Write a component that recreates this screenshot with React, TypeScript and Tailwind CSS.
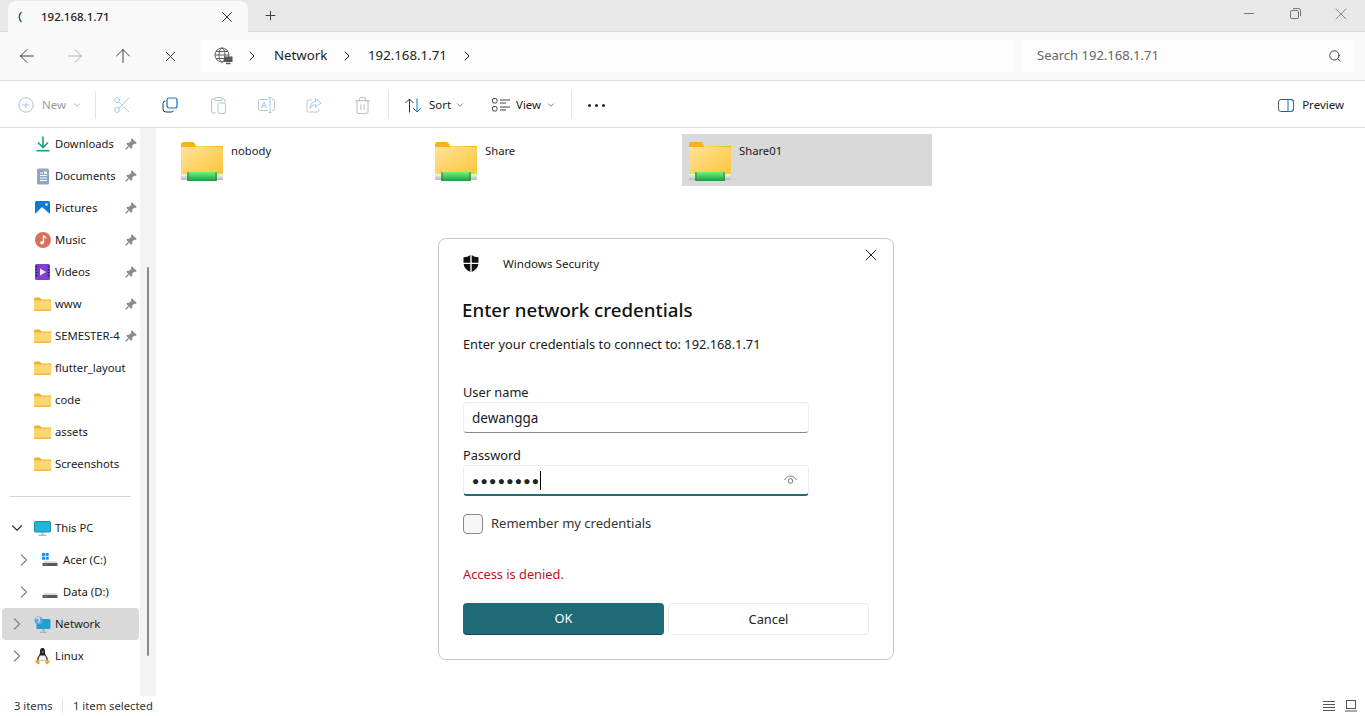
import { ArrowLeft, ArrowRight, ArrowUp, ChevronDown, ChevronRight, Plus, Scissors, Search, Trash2, X } from "lucide-react";

const FolderSmall = () => (
  <svg width="17" height="14" viewBox="0 0 17 14" className="shrink-0">
    <path d="M0 2a1.500 1.500 0 0 1 1.500-1.500h4L7.500 2.500H17V5H0z" fill="#f2b01e" />
    <path d="M0 3.500h15.500A1.500 1.500 0 0 1 17 5v7.500a1.200 1.200 0 0 1-1.200 1.200H1.200A1.200 1.200 0 0 1 0 12.500z" fill="#fbd774" />
    <path d="M0 12.600h17v.2a1 1 0 0 1-1 1H1a1 1 0 0 1-1-1z" fill="#eeb32e" />
  </svg>
);

const NetFolder = ({ id }: { id: string }) => (
  <svg width="42" height="40" viewBox="0 0 42 40" className="shrink-0">
    <defs>
      <linearGradient id={`f${id}`} x1="0" y1="0" x2="1" y2="1">
        <stop offset="0" stopColor="#fee29a" />
        <stop offset="1" stopColor="#fdc638" />
      </linearGradient>
      <linearGradient id={`g${id}`} x1="0" y1="0" x2="0" y2="1">
        <stop offset="0" stopColor="#72f07a" />
        <stop offset="1" stopColor="#1f9a45" />
      </linearGradient>
      <linearGradient id={`b${id}`} x1="0" y1="0" x2="0" y2="1">
        <stop offset="0" stopColor="#f6f6f6" />
        <stop offset="1" stopColor="#b8b8b8" />
      </linearGradient>
    </defs>
    <path d="M0 2.500A2.500 2.500 0 0 1 2.500 0h8.500a3 3 0 0 1 3 2l1 2h26a1 1 0 0 1 1 1v3H0z" fill="#f6b417" />
    <path d="M0 5h14.500l1.500-1 24 1a2 2 0 0 1 2 2v26H0z" fill={`url(#f${id})`} />
    <rect x="0" y="32" width="42" height="6" fill={`url(#b${id})`} />
    <rect x="6" y="30" width="30" height="9" rx="1" fill={`url(#g${id})`} />
    <path d="M7 30v9M35 30v9" stroke="#1c8f3f" strokeWidth="1" />
  </svg>
);

const Pin = () => (
  <svg width="12" height="12" viewBox="0 0 12 12" className="shrink-0">
    <path d="M7 .3 11.700 5 10.700 6 9.200 5.700 7.300 7.600 7.200 9.800 6 10.700 1.300 6 2.200 4.800 4.400 4.700 6.300 2.800 6 1.300z" fill="#878d94" />
    <path d="M3.500 8.500 .8 11.200" stroke="#878d94" strokeWidth="1.400" />
  </svg>
);

const DownloadIcon = () => (
  <svg width="16" height="16" viewBox="0 0 16 16">
    <path d="M8 .5v10M3 6.500l5 5 5-5" stroke="#12a57d" strokeWidth="1.600" fill="none" />
    <path d="M1.500 14.700h13" stroke="#12a57d" strokeWidth="1.600" />
  </svg>
);

const DocumentIcon = () => (
  <svg width="16" height="17" viewBox="0 0 16 17">
    <rect x="2" y="0.500" width="12" height="16" rx="1.500" fill="#8fa4c0" />
    <path d="M5 5h3M5 7.500h7M5 10h7M5 12.500h7" stroke="#fff" strokeWidth="1" />
    <rect x="9" y="3.500" width="3" height="2.500" fill="#fff" />
  </svg>
);

const PictureIcon = () => (
  <svg width="15" height="15" viewBox="0 0 15 15">
    <rect width="15" height="15" rx="1.500" fill="#0f79d4" />
    <path d="M0 13 7 6l8 7v2H0z" fill="#fff" />
    <circle cx="11.500" cy="3.500" r="1.200" fill="#fff" />
  </svg>
);

const MusicIcon = () => (
  <svg width="16" height="16" viewBox="0 0 16 16">
    <circle cx="8" cy="8" r="8" fill="#d9705e" />
    <path d="M8.500 3.500v7" stroke="#fff" strokeWidth="1.400" />
    <path d="M8.500 3.500c1 1.500 2.500 1.500 2.500 3" stroke="#fff" strokeWidth="1.200" fill="none" />
    <circle cx="7" cy="10.800" r="1.800" fill="#fff" />
  </svg>
);

const VideoIcon = () => (
  <svg width="15" height="16" viewBox="0 0 15 16">
    <rect width="15" height="16" rx="1.500" fill="#7e3fd1" />
    <path d="M5 4.500v7L11 8z" fill="#f1e6ff" />
    <path d="M1.500 2v12M13.500 2v12" stroke="#2e1266" strokeWidth="1.500" strokeDasharray="1.500 1.500" />
  </svg>
);

const MonitorIcon = () => (
  <svg width="17" height="15" viewBox="0 0 17 15">
    <rect x="0.500" y="0.500" width="16" height="10.500" rx="1" fill="#23b4d8" stroke="#1a8eb2" />
    <path d="M8.500 11v2.500" stroke="#9bb0bb" strokeWidth="2" />
    <path d="M4.500 14.300h8" stroke="#9bb0bb" strokeWidth="1.200" />
  </svg>
);

const DriveIcon = ({ win }: { win?: boolean }) => (
  <svg width="16" height="14" viewBox="0 0 16 14">
    {win && (
      <g fill="#1495e8">
        <rect x="0" y="0" width="3" height="3" />
        <rect x="3.700" y="0" width="3" height="3" />
        <rect x="0" y="3.700" width="3" height="3" />
        <rect x="3.700" y="3.700" width="3" height="3" />
      </g>
    )}
    <path d="M2 8h12l1.500 2H.5z" fill="#dcdcdc" />
    <rect x="0.500" y="10" width="15" height="3" rx="0.500" fill="#55585c" />
    <rect x="3" y="11" width="1.500" height="1" fill="#5dd35d" />
  </svg>
);

const NetworkIcon = () => (
  <svg width="17" height="17" viewBox="0 0 17 17">
    <rect x="2.500" y="3" width="14" height="10" rx="1" fill="#1e9fcf" />
    <path d="M9.500 13v2.500" stroke="#9bb0bb" strokeWidth="2" />
    <path d="M6 16.300h7" stroke="#9bb0bb" strokeWidth="1.200" />
    <circle cx="4.500" cy="4.500" r="4" fill="#6aa6dc" />
    <path d="M2 3c1-2 3-1.500 3.500-.5S4 5 5 6.500" stroke="#d9ebf7" strokeWidth="1.200" fill="none" />
  </svg>
);

const LinuxIcon = () => (
  <svg width="15" height="17" viewBox="0 0 15 17">
    <path d="M7.500 0C5 0 5 2.500 5 4.500 5 7 2 9 2 12.500h11C13 9 10 7 10 4.500 10 2.500 10 0 7.500 0z" fill="#222" />
    <path d="M5 7.500c-1 1.500-1.500 3-1.500 5h8c0-2-.5-3.500-1.500-5z" fill="#f4f4f4" />
    <path d="M6 3.500h3l-1.500 1.500z" fill="#eca81c" />
    <path d="M0 13.500 3 11l2 4-2 1.500zM15 13.500 12 11l-2 4 2 1.500z" fill="#eca81c" />
  </svg>
);

const GlobeIcon = () => (
  <svg width="19" height="18" viewBox="0 0 19 18" fill="none">
    <circle cx="8" cy="8" r="7" stroke="#5f5f5f" strokeWidth="1" />
    <ellipse cx="8" cy="8" rx="3" ry="7" stroke="#5f5f5f" />
    <path d="M1 8h14M2 4.500h12M2 11.500h12" stroke="#5f5f5f" />
    <rect x="10" y="9.500" width="8.500" height="5.500" fill="#555" />
    <path d="M12 16.500h4.500" stroke="#555" strokeWidth="1.500" />
  </svg>
);

const CopyIcon = () => (
  <svg width="16" height="16" viewBox="0 0 16 16" fill="none">
    <path d="M3.500 4A2.500 2.500 0 0 0 1 6.500V12a3 3 0 0 0 3 3h5.500a2.500 2.500 0 0 0 2.200-1.500" stroke="#333" strokeWidth="1" />
    <rect x="5" y="1" width="10" height="10" rx="2" stroke="#0a74d0" strokeWidth="1.200" />
  </svg>
);

const PasteIcon = () => (
  <svg width="15" height="17" viewBox="0 0 15 17" fill="none">
    <path d="M4 2H2a1.500 1.500 0 0 0-1.500 1.500v11A1.500 1.500 0 0 0 2 16h3M11 2h1.500A1.500 1.500 0 0 1 14 3.500V5" stroke="#bdbdbd" />
    <rect x="4" y="0.500" width="7" height="3" rx="1" stroke="#bdbdbd" />
    <rect x="7" y="6" width="7.500" height="10.500" rx="1.500" stroke="#9cc8ee" />
  </svg>
);

const RenameIcon = () => (
  <svg width="17" height="16" viewBox="0 0 17 16" fill="none">
    <path d="M10 2.500H2a1.500 1.500 0 0 0-1.500 1.500v8A1.500 1.500 0 0 0 2 13.500h8M14 2.500h1a1.500 1.500 0 0 1 1.500 1.500v8a1.500 1.500 0 0 1-1.500 1.500h-1" stroke="#c4c4c4" />
    <path d="M3.500 11 6 5l2.500 6M4.500 9h3" stroke="#9cc8ee" />
    <path d="M12 .5v15M10.500.5h3M10.500 15.500h3" stroke="#9cc8ee" />
  </svg>
);

const ShareIcon = () => (
  <svg width="16" height="15" viewBox="0 0 16 15" fill="none">
    <path d="M6 2H2.500A1.500 1.500 0 0 0 1 3.500v9A1.500 1.500 0 0 0 2.500 14h9a1.500 1.500 0 0 0 1.500-1.500V11" stroke="#c4c4c4" />
    <path d="M9.500.8 15 5l-5.500 4.200V6.800C7 6.800 5 8 4 10.500c0-4 2-6.500 5.500-7z" stroke="#9cc8ee" />
  </svg>
);

const SortIcon = () => (
  <svg width="17" height="15" viewBox="0 0 17 15" fill="none" className="shrink-0">
    <path d="M4.500 14.500V1M.5 5l4-4 4 4" stroke="#333" />
    <path d="M12 .5V14M8 10l4 4 4-4" stroke="#0a74d0" />
  </svg>
);

const ViewIcon = () => (
  <svg width="18" height="14" viewBox="0 0 18 14" fill="none" className="shrink-0">
    <rect x="0.500" y="0.500" width="4.500" height="4.500" rx="1.500" stroke="#444" />
    <rect x="0.500" y="8.500" width="4.500" height="4.500" rx="1.500" stroke="#444" />
    <path d="M8 2h10M8 5h6M8 9h10M8 12h6" stroke="#444" />
  </svg>
);

const PreviewIcon = () => (
  <svg width="16" height="13" viewBox="0 0 16 13" fill="none">
    <rect x="0.500" y="0.500" width="15" height="12" rx="2.500" stroke="#555" />
    <path d="M10 .5h3A2.500 2.500 0 0 1 15.500 3v7a2.500 2.500 0 0 1-2.500 2.500h-3z" stroke="#0a74d0" />
  </svg>
);

const ShieldIcon = () => (
  <svg width="16" height="17" viewBox="0 0 16 17" className="shrink-0">
    <path d="M7.300 0C5.500 1.500 3 2.200.5 2.300v5.400h6.800zM8.700 0c1.800 1.500 4.300 2.200 6.800 2.300v5.400H8.700zM.6 9.100h6.700V17C3.500 15.500 1.100 13 .6 9.100zM8.700 9.100h6.700c-.5 3.900-2.900 6.400-6.700 7.900z" fill="#111" />
  </svg>
);

const RestoreIcon = () => (
  <svg width="11" height="11" viewBox="0 0 11 11" fill="none">
    <rect x="0.500" y="2.500" width="8" height="8" rx="1.500" stroke="#777" />
    <path d="M3 .5h5.500a2 2 0 0 1 2 2V8" stroke="#777" />
  </svg>
);

const EyeIcon = () => (
  <svg width="13" height="10" viewBox="0 0 13 10" fill="none" className="ml-auto">
    <path d="M.5 5C2 2.500 4 1 6.500 1s4.500 1.500 6 4" stroke="#777" />
    <circle cx="6.500" cy="6" r="2.300" stroke="#777" />
  </svg>
);

const navItems = [
  { label: "Downloads", icon: <DownloadIcon />, pin: true },
  { label: "Documents", icon: <DocumentIcon />, pin: true },
  { label: "Pictures", icon: <PictureIcon />, pin: true },
  { label: "Music", icon: <MusicIcon />, pin: true },
  { label: "Videos", icon: <VideoIcon />, pin: true },
  { label: "www", icon: <FolderSmall />, pin: true },
  { label: "SEMESTER-4", icon: <FolderSmall />, pin: true },
  { label: "flutter_layout", icon: <FolderSmall /> },
  { label: "code", icon: <FolderSmall /> },
  { label: "assets", icon: <FolderSmall /> },
  { label: "Screenshots", icon: <FolderSmall /> },
];

const Sidebar = () => (
  <aside className="w-[140px] shrink-0 overflow-hidden text-[11.250px] text-[#1a1a1a]">
    {navItems.map((item) => (
      <div className="flex h-8 items-center pr-[3px]" key={item.label}>
        <div className="w-[34px] shrink-0" />
        <div className="flex w-[17px] shrink-0 justify-center">{item.icon}</div>
        <span className="ml-1 flex-1 whitespace-nowrap">{item.label}</span>
        {item.pin && <Pin />}
      </div>
    ))}
    <div className="mx-[10px] mt-4 mb-[15px] h-px w-[121px] bg-[#d5d5d5]" />
    <div className="flex h-8 items-center">
      <ChevronDown size={18} className="ml-[8px] text-[#333]" strokeWidth={1.500} />
      <div className="ml-[8px] flex w-[17px] justify-center"><MonitorIcon /></div>
      <span className="ml-1">This PC</span>
    </div>
    <div className="flex h-8 items-center">
      <ChevronRight size={20} className="ml-[14px] text-[#888]" strokeWidth={1.500} />
      <div className="ml-[8px] w-[16px]"><DriveIcon win /></div>
      <span className="ml-[5px]">Acer (C:)</span>
    </div>
    <div className="flex h-8 items-center">
      <ChevronRight size={20} className="ml-[14px] text-[#888]" strokeWidth={1.500} />
      <div className="ml-[8px] w-[16px]"><DriveIcon /></div>
      <span className="ml-[5px]">Data (D:)</span>
    </div>
    <div className="ml-[2px] flex h-8 w-[137px] items-center rounded-[4px] bg-[#d9d9d9]">
      <ChevronRight size={20} className="ml-[5px] text-[#888]" strokeWidth={1.500} />
      <div className="ml-[7px] flex w-[17px] justify-center"><NetworkIcon /></div>
      <span className="ml-1">Network</span>
    </div>
    <div className="flex h-8 items-center">
      <ChevronRight size={20} className="ml-[7px] text-[#888]" strokeWidth={1.500} />
      <div className="ml-[7px] flex w-[17px] justify-center"><LinuxIcon /></div>
      <span className="ml-1">Linux</span>
    </div>
  </aside>
);

const ToolIcon = ({ children }: { children: React.ReactNode }) => (
  <div className="flex w-12 shrink-0 items-center justify-center">{children}</div>
);

const Toolbar = () => (
  <div className="flex h-[47px] shrink-0 items-center border-b border-[#e0e0e0] bg-white pt-[2px] text-[11.500px] text-[#1a1a1a]">
    <div className="flex w-[95px] shrink-0 items-center pl-[18px] text-[#9a9a9a]">
      <svg width="16" height="16" viewBox="0 0 16 16" fill="none">
        <circle cx="8" cy="8" r="7.200" stroke="#bdbdbd" />
        <path d="M8 4.500v7M4.500 8h7" stroke="#9cc8ee" />
      </svg>
      <span className="ml-[8px]">New</span>
      <ChevronDown size={10} className="ml-[6px]" />
    </div>
    <div className="h-7 w-px bg-[#e5e5e5]" />
    <div className="ml-[2px] flex shrink-0">
      <ToolIcon><Scissors size={20} strokeWidth={1.100} className="text-[#9cc8ee]" /></ToolIcon>
      <ToolIcon><CopyIcon /></ToolIcon>
      <ToolIcon><PasteIcon /></ToolIcon>
      <ToolIcon><RenameIcon /></ToolIcon>
      <ToolIcon><ShareIcon /></ToolIcon>
      <ToolIcon><Trash2 size={19} strokeWidth={1.100} className="text-[#b0b0b0]" /></ToolIcon>
    </div>
    <div className="ml-[2px] h-7 w-px bg-[#e5e5e5]" />
    <div className="ml-[16px] flex items-center">
      <SortIcon />
      <span className="ml-[7px] w-[22px] whitespace-nowrap">Sort</span>
      <ChevronDown size={10} className="ml-[4px] text-[#666]" />
    </div>
    <div className="ml-[27px] flex items-center">
      <ViewIcon />
      <span className="ml-[6px] w-[25px] whitespace-nowrap">View</span>
      <ChevronDown size={10} className="ml-[5px] text-[#666]" />
    </div>
    <div className="ml-[15px] h-7 w-px bg-[#e5e5e5]" />
    <div className="ml-[16px] flex gap-[4px]">
      <span className="size-[3px] rounded-full bg-[#222]" />
      <span className="size-[3px] rounded-full bg-[#222]" />
      <span className="size-[3px] rounded-full bg-[#222]" />
    </div>
    <div className="mr-[21px] ml-auto flex items-center">
      <PreviewIcon />
      <span className="ml-2">Preview</span>
    </div>
  </div>
);

const files = [
  { name: "nobody", selected: false },
  { name: "Share", selected: false },
  { name: "Share01", selected: true },
];

const Dialog = () => (
  <div className="absolute top-[238px] left-[438px] h-[422px] w-[456px] rounded-[8px] border border-[#c8c8c8] bg-white pl-[24px] text-[#1a1a1a]">
    <button className="absolute top-[6px] right-[12px] text-[#222]"><X size={20} strokeWidth={1.200} /></button>
    <div className="flex h-[34px] items-center pt-[14px]">
      <ShieldIcon />
      <span className="mt-[1px] ml-[24px] text-[11.600px]">Windows Security</span>
    </div>
    <h1 className="mt-[23px] -ml-px h-[28px] text-[18.700px] leading-[28px] font-medium text-[#111]">Enter network credentials</h1>
    <p className="mt-[10px] text-[12.800px] leading-5">Enter your credentials to connect to: 192.168.1.71</p>
    <label className="mt-[28px] block text-[12.800px] leading-5">User name</label>
    <div className="flex h-[31px] w-[346px] items-center rounded-[4px] border border-[#ececec] border-b-[#8a8a8a] px-2 pt-px text-[13.500px]">dewangga</div>
    <label className="mt-[12px] block text-[12.800px] leading-5">Password</label>
    <div className="flex h-[31px] w-[346px] items-center rounded-[4px] border border-[#ececec] border-b-2 border-b-[#1f6a77] pr-[11px] pl-2">
      <span className="mt-[2px] text-[12px] tracking-[1.300px] text-[#222]">●●●●●●●●</span>
      <span className="h-[19px] w-px bg-black" />
      <EyeIcon />
    </div>
    <div className="mt-[18px] flex h-5 items-center">
      <span className="size-5 rounded-[4px] border border-[#8a8a8a] bg-[#f7f7f7]" />
      <span className="mb-px ml-2 text-[13px] text-[#333]">Remember my credentials</span>
    </div>
    <p className="mt-[30px] text-[12.800px] leading-5 text-[#c50f1f]">Access is denied.</p>
    <div className="mt-[19px] flex gap-[4px]">
      <button className="h-8 w-[201px] rounded-[4px] border-b border-b-[#104a55] bg-[#1f6a77] pt-px text-[12.800px] text-white">OK</button>
      <button className="h-8 w-[201px] rounded-[4px] border border-[#ececec] bg-white pt-px text-[12.800px] text-[#222]">Cancel</button>
    </div>
  </div>
);

export default function App() {
  return (
    <div className="relative flex h-[716px] w-[1365px] flex-col overflow-hidden bg-white font-['Noto_Sans','Open_Sans',sans-serif]">
      {/* tab strip */}
      <div className="flex h-8 shrink-0 items-end border-b border-[#d9d9d9] bg-[#e8e8e8] pl-2">
        <div className="-mb-px flex h-[31px] w-[240px] items-center rounded-t-[8px] bg-[#f9f9f9] pr-[12px] pl-[8px] text-[11.500px] text-[#222]">
          <svg width="6" height="12" viewBox="0 0 6 12" fill="none" className="ml-[1px]">
            <path d="M4.500 1C1.500 3.500 1.500 8.500 4.500 11" stroke="#1f6a77" strokeWidth="1.500" />
          </svg>
          <span className="ml-[18px] font-medium">192.168.1.71</span>
          <X size={18} strokeWidth={1.200} className="ml-auto text-[#222]" />
        </div>
        <div className="flex h-[31px] w-[44px] items-center justify-center">
          <Plus size={15} strokeWidth={1.500} className="text-[#333]" />
        </div>
        <div className="mb-[4px] ml-auto flex items-center self-center pr-px text-[#777]">
          <div className="flex w-[46px] justify-center"><span className="h-px w-[10px] bg-[#777]" /></div>
          <div className="flex w-[46px] justify-center"><RestoreIcon /></div>
          <div className="flex w-[46px] justify-center"><X size={20} strokeWidth={1} /></div>
        </div>
      </div>

      {/* address row */}
      <div className="flex h-[49px] shrink-0 items-center border-b border-[#e0e0e0] bg-[#f9f9f9] pr-[10px]">
        <div className="flex w-[195px] shrink-0 pl-[3px] text-[#333]">
          <div className="flex w-[48px] justify-center"><ArrowLeft size={22} strokeWidth={1} /></div>
          <div className="flex w-[48px] justify-center text-[#aaa]"><ArrowRight size={22} strokeWidth={1} /></div>
          <div className="flex w-[48px] justify-center"><ArrowUp size={22} strokeWidth={1} /></div>
          <div className="flex w-[48px] items-center justify-center"><X size={17} strokeWidth={1.300} className="mr-[2px]" /></div>
        </div>
        <div className="ml-[6px] flex h-8 w-[813px] items-center rounded-[4px] bg-[#fdfdfd] pl-[13px] text-[13.250px] text-[#222]">
          <GlobeIcon />
          <ChevronRight size={16} strokeWidth={1.500} className="ml-[11px]" />
          <span className="ml-[14px] w-[53px] whitespace-nowrap">Network</span>
          <ChevronRight size={16} strokeWidth={1.500} className="ml-[12px]" />
          <span className="ml-[13px] w-[76px] whitespace-nowrap">192.168.1.71</span>
          <ChevronRight size={16} strokeWidth={1.500} className="ml-[15px]" />
        </div>
        <div className="ml-[8px] flex h-8 flex-1 items-center rounded-[4px] bg-[#fdfdfd] pr-[13px] pl-[15px] text-[13px] text-[#666]">
          <span>Search 192.168.1.71</span>
          <Search size={14} strokeWidth={1.600} className="ml-auto text-[#333]" />
        </div>
      </div>

      <Toolbar />

      <div className="flex min-h-0 flex-1">
        <Sidebar />
        {/* scrollbar strip */}
        <div className="relative w-[16px] shrink-0 bg-[#f3f3f3]">
          <div className="absolute top-[139px] left-[7px] h-[389px] w-[2px] rounded-full bg-[#8a8a8a]" />
        </div>
        <main className="flex flex-1 items-start gap-1 pt-[6px] pl-[18px] text-[11.250px] text-[#1a1a1a]">
          {files.map((file) => (
            <div className={`flex h-[52px] w-[250px] pt-[8px] pl-[7px] ${file.selected ? "bg-[#d9d9d9]" : ""}`} key={file.name}>
              <NetFolder id={file.name} />
              <span className="mt-px ml-2">{file.name}</span>
            </div>
          ))}
        </main>
      </div>

      {/* status bar */}
      <div className="flex h-5 shrink-0 items-center pr-[8px] pl-[14px] text-[11.250px] text-[#333]">
        <span className="w-[48px]">3 items</span>
        <span className="h-[14px] w-px bg-[#e5e5e5]" />
        <span className="ml-[10px]">1 item selected</span>
        <div className="ml-auto flex items-center gap-[10px]">
          <svg width="12" height="11" viewBox="0 0 12 11" stroke="#555"><path d="M0 .5h12M0 3.500h12M0 6.500h12M0 9.500h12" /></svg>
          <svg width="12" height="12" viewBox="0 0 12 12" fill="none" stroke="#555"><rect x="1.500" y="0.500" width="9" height="8" /><path d="M0 11h12" /></svg>
        </div>
      </div>

      <Dialog />
    </div>
  );
}
